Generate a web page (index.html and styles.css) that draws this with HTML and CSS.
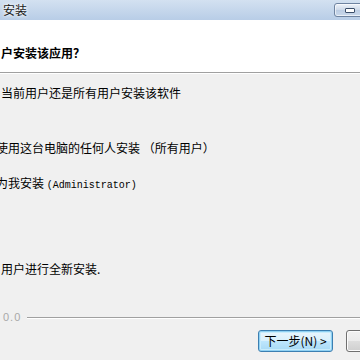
FILE: index.html
```html
<!DOCTYPE html>
<html lang="zh-CN">
<head>
<meta charset="utf-8">
<title>安装</title>
<link rel="stylesheet" href="styles.css">
</head>
<body>
<div class="window">
  <div class="titlebar">
    <span class="title-text">安装</span>
    <span class="min-btn"><span class="min-glyph"></span></span>
  </div>
  <div class="header">
    <div class="heading">户安装该应用？</div>
  </div>
  <div class="content">
    <p class="line l1">当前用户还是所有用户安装该软件</p>
    <p class="line l2 cut">使用这台电脑的任何人安装 （所有用户）</p>
    <p class="line l3 cut">为我安装 <span class="mono">(Administrator)</span></p>
    <p class="line l4">用户进行全新安装.</p>
  </div>
  <div class="footer">
    <div class="brand-row">
      <span class="brand">0.0</span>
      <span class="etched"></span>
    </div>
    <div class="button-row">
      <button class="btn btn-default">下一步(N) &gt;</button>
      <button class="btn">取消(C)</button>
    </div>
  </div>
</div>
</body>
</html>
```
FILE: styles.css
```css
html, body {
  margin: 0;
  padding: 0;
}
body {
  width: 360px;
  height: 360px;
  overflow: hidden;
  background: #f0f0f0;
  font-family: "Noto Sans CJK SC", "Liberation Sans", sans-serif;
  font-size: 12px;
  color: #000;
}
.window {
  width: 360px;
  height: 360px;
  display: flex;
  flex-direction: column;
}
.titlebar {
  height: 20px;
  flex-shrink: 0;
  background: linear-gradient(#d3e1f1, #b8cde7);
  display: flex;
  align-items: flex-start;
  justify-content: space-between;
  padding-left: 3px;
}
.title-text {
  line-height: 20px;
  font-size: 12px;
  color: #1a1a1a;
  text-shadow: 0 0 3px #ffffff, 0 0 5px #ffffff;
}
.min-btn {
  margin-top: 3px;
  margin-right: -4px;
  width: 30px;
  height: 14px;
  border: 1px solid #6f84a1;
  border-radius: 3px;
  background: linear-gradient(#eef3fa, #cdd9e9 50%, #bccde3 51%, #c9d8eb);
  box-shadow: inset 0 0 0 1px rgba(255,255,255,0.6);
  display: flex;
  justify-content: flex-start;
  align-items: center;
  padding-left: 10px;
  box-sizing: border-box;
}
.min-glyph {
  width: 8px;
  height: 3px;
  border: 1px solid #3b4e6a;
  background: #ffffff;
  border-radius: 1px;
}
.header {
  height: 53px;
  flex-shrink: 0;
  background: #ffffff;
  border-bottom: 1px solid #a0a0a0;
  box-shadow: 0 1px 0 #ffffff;
  box-sizing: border-box;
  padding-top: 25px;
  padding-left: 1px;
}
.heading {
  font-weight: bold;
  line-height: 16px;
  color: #000;
}
.content {
  padding-top: 12px;
  padding-left: 1px;
}
.line {
  margin: 0;
  line-height: 16px;
  white-space: nowrap;
  color: #000;
}
.cut {
  margin-left: -5px;
}
.l2 { margin-top: 39px; }
.l3 { margin-top: 19px; }
.l4 { margin-top: 67px; }
.mono {
  font-family: "Liberation Mono", "DejaVu Sans Mono", monospace;
  font-size: 10px;
}
.footer {
  margin-top: 32px;
}
.brand-row {
  display: flex;
  align-items: center;
  height: 16px;
}
.brand {
  font-family: "Liberation Sans", sans-serif;
  font-size: 11px;
  letter-spacing: 1px;
  color: #a9a9a9;
  padding-left: 3px;
  line-height: 16px;
}
.etched {
  flex: 1;
  margin-left: 6px;
  margin-top: 2px;
  height: 0;
  border-top: 1px solid #a0a0a0;
  border-bottom: 1px solid #ffffff;
}
.button-row {
  margin-top: 5px;
  display: flex;
  justify-content: flex-end;
  gap: 13px;
  margin-right: -61px;
}
.btn {
  width: 75px;
  height: 22px;
  flex-shrink: 0;
  padding: 0;
  font-family: "Noto Sans CJK SC", "Liberation Sans", sans-serif;
  font-size: 12px;
  line-height: 18px;
  color: #000;
  border: 1px solid #707070;
  border-radius: 3px;
  background: linear-gradient(#f2f2f2, #ebebeb 50%, #dddddd 51%, #cfcfcf);
  box-shadow: inset 0 0 0 1px #fcfcfc;
}
.btn-default {
  border-color: #3c7fb1;
  background: linear-gradient(#eaf6fd, #d9f0fc 50%, #bee6fd 51%, #a7d9f5);
  box-shadow: inset 0 0 0 1px #8fd1f3, inset 0 0 0 2px #c9ecfc;
}
```
